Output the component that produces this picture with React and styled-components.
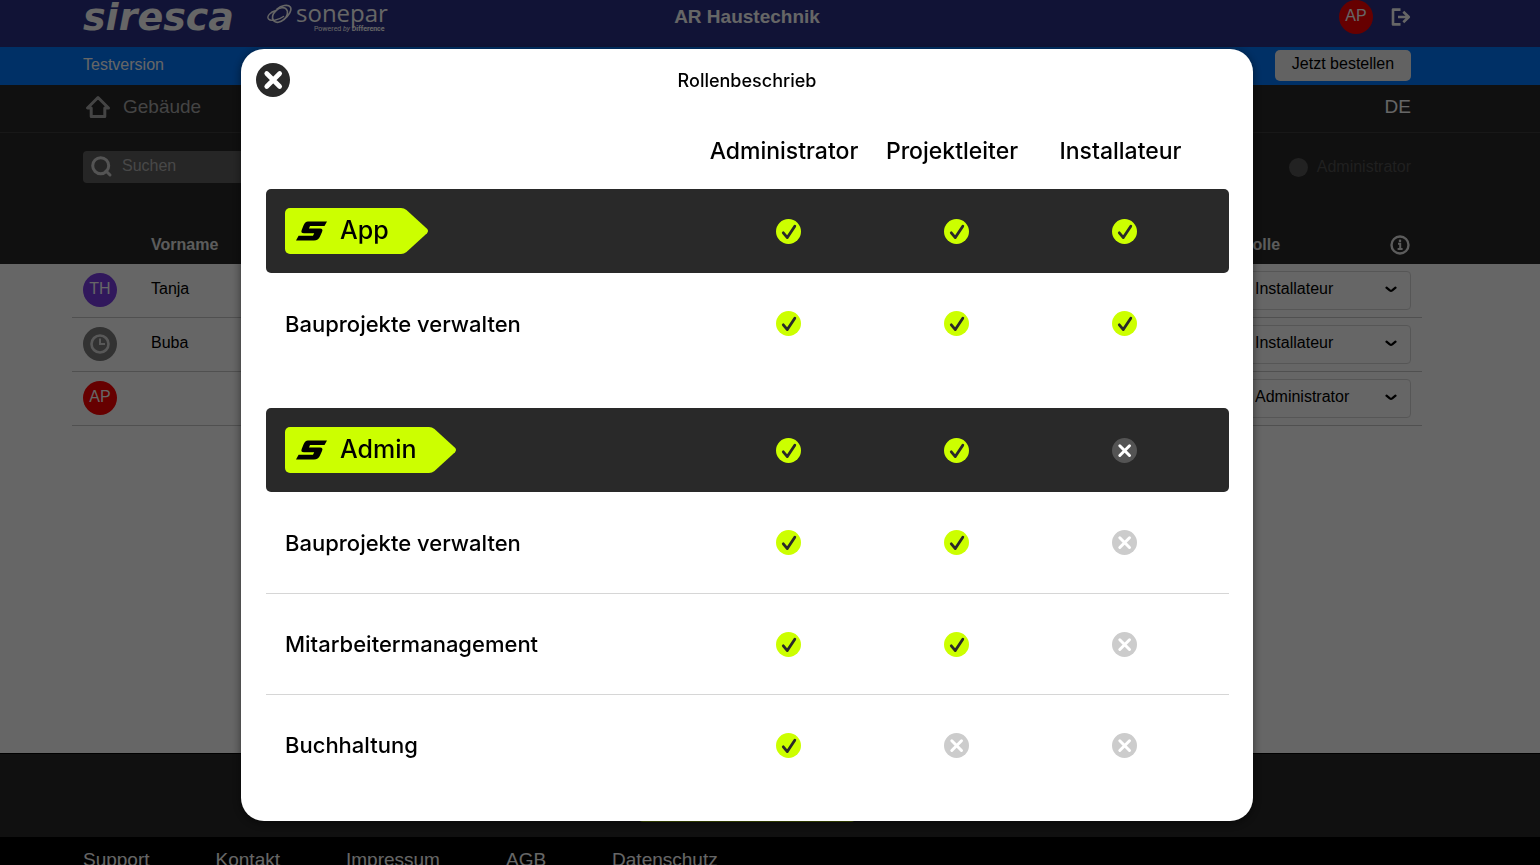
import React from "react";
import styled, { createGlobalStyle, css } from "styled-components";

const lime = "#ccff00";
const dark = "#292929";

const GlobalStyle = createGlobalStyle`
  *, *::before, *::after { box-sizing: border-box; }
  body {
    margin: 0;
    overflow: hidden;
    background: #000;
    font-family: "Liberation Sans", Arial, sans-serif;
    font-size: 16px;
    color: #000;
  }
  button, input, select { font: inherit; color: inherit; }
  a { color: inherit; text-decoration: none; }
  svg { display: block; flex-shrink: 0; }
`;

const Page = styled.div`
  display: flex;
  flex-direction: column;
  height: 100vh;
  overflow: hidden;
`;

const Band = styled.div`
  flex-shrink: 0;
  padding-right: 46px;
  background: ${(p) => p.$bg};
`;

const Inner = styled.div`
  max-width: 1328px;
  margin: 0 auto;
  display: flex;
  align-items: center;
  justify-content: space-between;
`;

const HeaderRow = styled(Inner)`
  display: grid;
  grid-template-columns: 1fr auto 1fr;
  height: 47px;
  padding-bottom: 15px;
  color: #fff;
`;

const Logos = styled.div`
  display: flex;
  align-items: center;
  gap: 26px;
`;

const Siresca = styled.span`
  width: 158px;
  font: italic bold 38px/32px "DejaVu Sans", sans-serif;
`;

const Sonepar = styled.div`
  display: flex;
  gap: 4px;
`;

const SoneparWords = styled.div`
  display: flex;
  flex-direction: column;
  font: 24px/24px "Open Sans", sans-serif;
`;

const Powered = styled.small`
  padding-left: 18px;
  font: 7px/8px Roboto, sans-serif;
`;

const Company = styled.strong`
  font-size: 19px;
`;

const Actions = styled.div`
  display: flex;
  align-items: center;
  justify-content: flex-end;
  gap: 18px;
`;

const IconButton = styled.button`
  display: flex;
  padding: 0;
  border: 0;
  background: none;
`;

const Avatar = styled.span`
  display: flex;
  align-items: center;
  justify-content: center;
  width: 34px;
  height: 34px;
  padding-bottom: ${(p) => (p.$icon ? 0 : 2)}px;
  border-radius: 50%;
  background: ${(p) => p.$color};
  color: #fff;
`;

const TrialRow = styled(Inner)`
  height: 38px;
  padding-bottom: 2px;
  color: #fff;
`;

const OrderButton = styled.button`
  width: 136px;
  height: 31px;
  padding: 0 0 3px;
  border: 0;
  border-radius: 5px;
  background: #f5f5f5;
  color: #000;
`;

const NavRow = styled(Inner)`
  height: 47px;
  padding-bottom: 4px;
  font-size: 19px;
  color: #fff;
`;

const NavLink = styled.a`
  display: flex;
  align-items: center;
  gap: 12px;
  color: #aaa;
`;

const Divider = styled.div`
  flex-shrink: 0;
  height: 1px;
  background: ${(p) => p.$color};
`;

const FilterRow = styled(Inner)`
  padding-top: 18px;
`;

const SearchLabel = styled.label`
  display: flex;
  align-items: center;
  gap: 9px;
  width: 320px;
  height: 32px;
  padding: 0 8px;
  border-radius: 4px;
  background: #606060;
  color: #d2d2d2;
`;

const SearchInput = styled.input`
  flex: 1;
  min-width: 0;
  padding: 0 0 2px;
  border: 0;
  background: none;
  &::placeholder { color: #b4b4b4; opacity: 1; }
`;

const RoleFilter = styled.label`
  display: flex;
  align-items: center;
  gap: 9px;
  color: #505050;
`;

const RoleRadio = styled.input`
  appearance: none;
  width: 19px;
  height: 19px;
  margin: 0;
  border-radius: 50%;
  background: #555;
`;

const HeadRow = styled(Inner)`
  height: 81px;
  padding-top: 43px;
  font-weight: bold;
  color: #e6e6e6;
`;

const HeadName = styled.span`
  padding-left: 68px;
`;

const RoleHead = styled.div`
  display: flex;
  align-items: center;
  justify-content: space-between;
  width: 170px;
`;

const People = styled.main`
  flex: 1;
  padding-right: 46px;
  background: #fff;
`;

const PeopleList = styled.div`
  max-width: 1350px;
  margin: 0 auto;
`;

const Person = styled.div`
  display: flex;
  align-items: center;
  height: 54px;
  padding: 0 11px 1px;
  border-bottom: 1px solid #c8c8c8;
`;

const PersonName = styled.span`
  flex: 1;
  padding: 0 0 2px 34px;
`;

const SelectBox = styled.div`
  display: grid;
  align-items: center;
  width: 170px;
  height: 39px;
  border: 1px solid #d8d8d8;
  border-radius: 4px;
  & > * { grid-area: 1 / 1; }
  & > svg { justify-self: end; margin-right: 13px; pointer-events: none; }
`;

const RoleSelect = styled.select`
  appearance: none;
  width: 100%;
  height: 100%;
  padding: 0 32px 4px 13px;
  border: 0;
  background: none;
`;

const InviteRow = styled(Inner)`
  height: 83px;
  padding-bottom: 1px;
  justify-content: center;
`;

const InviteButton = styled.button`
  width: 216px;
  height: 54px;
  border: 0;
  border-radius: 4px;
  background: #a3cc00;
`;

const FooterNav = styled(Inner)`
  justify-content: flex-start;
  align-items: flex-start;
  gap: 66px;
  height: 28px;
  padding-top: 12px;
  font-size: 19px;
  line-height: 22px;
  color: #fff;
`;

const Overlay = styled.div`
  position: fixed;
  inset: 0;
  display: flex;
  align-items: center;
  justify-content: center;
  padding: 5px 46px 0 0;
  background: rgba(0, 0, 0, 0.6);
`;

const Modal = styled.section`
  width: 1012px;
  max-width: 100%;
  padding: 14px 24px 26px 25px;
  border-radius: 23px;
  background: #fff;
  box-shadow: 0 2px 10px rgba(0, 0, 0, 0.5);
  font-family: Inter, sans-serif;
`;

const ModalHead = styled.header`
  display: grid;
  grid-template-columns: 34px 1fr 34px;
  align-items: center;
  height: 34px;
  margin: 0 -9px 0 -10px;
`;

const ModalTitle = styled.h2`
  margin: 0;
  font-size: 18px;
  font-weight: 500;
  text-align: center;
`;

const Matrix = styled.table`
  width: 100%;
  table-layout: fixed;
  border-collapse: separate;
  border-spacing: 0;
  font-size: 22px;
  font-weight: 500;
`;

const RoleTh = styled.th`
  width: ${(p) => (p.$last ? 189 : 168)}px;
  height: 92px;
  padding: 16px ${(p) => (p.$last ? 28 : 8)}px 0 0;
  font-size: 23px;
  font-weight: inherit;
  white-space: nowrap;
`;

const RowTh = styled.th`
  padding: 0 0 0 19px;
  font-weight: inherit;
  text-align: left;
`;

const Cell = styled.td`
  padding: 0;
  & > svg { margin: 0 auto; }
  &:last-child { padding-right: 20px; }
`;

const Row = styled.tr`
  ${(p) => p.$dark ? css`
    height: 84px;
    & > * { background: ${dark}; }
    & > :first-child { border-radius: 5px 0 0 5px; }
    & > :last-child { border-radius: 0 5px 5px 0; }
  ` : css`
    height: 101px;
  `}
  ${(p) => p.$line && css`
    & > * { border-top: 1px solid #d6d6d6; }
  `}
`;

const Spacer = styled.tr`
  height: 34px;
`;

const Tag = styled.span`
  display: inline-flex;
  vertical-align: middle;
  height: 46px;
`;

const TagBody = styled.span`
  display: flex;
  align-items: center;
  gap: 13px;
  padding: 0 11px;
  border-radius: 5px 0 0 5px;
  background: ${lime};
  font-size: 25px;
`;

const TagText = styled.span`
  padding-bottom: 2px;
`;

const Status = ({ ok, dim }) => (
  <svg width="25" height="25" viewBox="0 0 25 25" fill="none" strokeLinecap="round" strokeLinejoin="round" role="img" aria-label={ok ? "Ja" : "Nein"}>
    <circle cx="12.5" cy="12.5" r="12.5" fill={ok ? lime : dim ? "#545454" : "#cccccc"} />
    {ok
      ? <path d="M7.3 13.8L11.3 18.6L18.8 7.2" stroke={dark} strokeWidth="2.8" />
      : <path d="M7.8 7.8L17.5 17.5M17.5 7.8L7.8 17.5" stroke="#fff" strokeWidth="3" />}
  </svg>
);

const ProductTag = ({ children }) => (
  <Tag>
    <TagBody>
      <svg width="31" height="20" viewBox="0 0 31 20" fill="#000">
        <path d="M12 0.5H31L28.5 5H14L13 7.5H24Q27.5 7.5 26 11L24 15.5Q22.3 19.5 18 19.5H0L2.6 14.8H17L18.2 12.2H8Q4.3 12.2 5.8 8.7L7.6 4.3Q9 0.5 12 0.5Z" />
      </svg>
      <TagText>{children}</TagText>
    </TagBody>
    <svg width="28" height="46" viewBox="0 0 28 46" fill={lime}>
      <path d="M0 0H1Q4 0 6.5 2L27 20.8Q29 23 27 25.2L6.5 44Q4 46 1 46H0Z" />
    </svg>
  </Tag>
);

const Chevron = () => (
  <svg width="12" height="8" viewBox="0 0 12 8" fill="none" stroke="#000" strokeWidth="2.2" strokeLinecap="round" strokeLinejoin="round">
    <path d="M1.5 1.6L4.8 4.4Q6 5.2 7.2 4.4L10.5 1.6" />
  </svg>
);

const people = [
  { name: "Tanja", initials: "TH", color: "#7a3ce6", role: "Installateur" },
  { name: "Buba", color: "#7d7d7d", role: "Installateur" },
  { name: "", initials: "AP", color: "#ff0000", role: "Administrator" },
];

const roles = ["Administrator", "Projektleiter", "Installateur"];

const matrix = [
  { label: "App", tag: true, access: [true, true, true] },
  { label: "Bauprojekte verwalten", access: [true, true, true], gapAfter: true },
  { label: "Admin", tag: true, access: [true, true, false] },
  { label: "Bauprojekte verwalten", access: [true, true, false] },
  { label: "Mitarbeitermanagement", access: [true, true, false], line: true },
  { label: "Buchhaltung", access: [true, false, false], line: true },
];

export default function App() {
  return (
    <>
      <GlobalStyle />
      <Page>
        <Band as="header" $bg="#2b3187">
          <HeaderRow>
            <Logos>
              <Siresca>siresca</Siresca>
              <Sonepar>
                <svg width="25" height="26" viewBox="0 0 25 26" fill="none" stroke="#fff" strokeLinecap="round">
                  <ellipse cx="13" cy="14" rx="8.6" ry="6" transform="rotate(-42 13 14)" strokeWidth="1.7" />
                  <path d="M9 9.5C3 11 -0.5 15.5 1.5 18C3.500 20.5 11 19.5 16.500 15.500" strokeWidth="1.4" />
                  <path d="M10 8C14 4.500 21 3 23.300 6C25.300 9 22 14.500 17 18.500" strokeWidth="1.6" />
                </svg>
                <SoneparWords>
                  sonepar
                  <Powered>Powered <i>by</i> <b>Difference</b></Powered>
                </SoneparWords>
              </Sonepar>
            </Logos>
            <Company>AR Haustechnik</Company>
            <Actions>
              <Avatar $color="#ff0000">AP</Avatar>
              <IconButton aria-label="Abmelden">
                <svg width="20" height="18" viewBox="0 0 20 18" fill="none" stroke="#fff" strokeWidth="2.6" strokeLinejoin="round">
                  <path d="M9.500 1.6H2V16.400H9.500M7 9H17.500M12.300 3.800L17.800 9L12.300 14.200" />
                </svg>
              </IconButton>
            </Actions>
          </HeaderRow>
        </Band>

        <Band $bg="#0078ff">
          <TrialRow>
            <span>Testversion</span>
            <OrderButton>Jetzt bestellen</OrderButton>
          </TrialRow>
        </Band>

        <Band as="nav" $bg="#282828">
          <NavRow>
            <NavLink href="#gebaeude">
              <svg width="28" height="24" viewBox="0 0 28 24" fill="none" stroke="#aaa" strokeWidth="3" strokeLinejoin="round">
                <path d="M15 2.500L4.500 13H8.200V21.500H21.800V13H25.500Z" />
              </svg>
              Gebäude
            </NavLink>
            <a href="#de">DE</a>
          </NavRow>
        </Band>
        <Divider $color="#3c3c3c" />

        <Band $bg="#282828">
          <FilterRow>
            <SearchLabel>
              <svg width="22" height="22" viewBox="0 0 22 22" fill="none" stroke="#d2d2d2" strokeWidth="3" strokeLinecap="round">
                <circle cx="9.700" cy="9.700" r="8" />
                <path d="M15 15L19 19" />
              </svg>
              <SearchInput placeholder="Suchen" aria-label="Suchen" />
            </SearchLabel>
            <RoleFilter>
              <RoleRadio type="radio" name="rolle" />
              Administrator
            </RoleFilter>
          </FilterRow>
          <HeadRow>
            <HeadName>Vorname</HeadName>
            <RoleHead>
              <span>Rolle</span>
              <IconButton aria-label="Rollenbeschrieb">
                <svg width="22" height="20" viewBox="0 0 22 20" fill="none" stroke="#e6e6e6" strokeWidth="2.4">
                  <circle cx="11" cy="10" r="8.500" />
                  <path d="M9 8.700H11.200V14M8.600 14H13.600" strokeWidth="2" />
                  <circle cx="11" cy="5.900" r="0.600" strokeWidth="1.400" />
                </svg>
              </IconButton>
            </RoleHead>
          </HeadRow>
        </Band>

        <People>
          <PeopleList>
            {people.map((p, i) => (
              <Person key={i}>
                <Avatar $color={p.color} $icon={!p.initials}>
                  {p.initials || (
                    <svg width="20" height="20" viewBox="0 0 20 20" fill="none" stroke="#dcdcdc" strokeWidth="2.600">
                      <circle cx="10" cy="10" r="8.500" />
                      <path d="M10 4.500V10H15" strokeWidth="2" />
                    </svg>
                  )}
                </Avatar>
                <PersonName>{p.name}</PersonName>
                <SelectBox>
                  <RoleSelect aria-label={`Rolle ${p.name}`} defaultValue={p.role}>
                    {roles.map((r) => <option key={r}>{r}</option>)}
                  </RoleSelect>
                  <Chevron />
                </SelectBox>
              </Person>
            ))}
          </PeopleList>
        </People>

        <Divider $color="#000" />
        <Band $bg="#282828">
          <InviteRow>
            <InviteButton aria-label="Einladen" />
          </InviteRow>
        </Band>
        <Band as="footer" $bg="#000">
          <FooterNav>
            <a href="#support">Support</a>
            <a href="#kontakt">Kontakt</a>
            <a href="#impressum">Impressum</a>
            <a href="#agb">AGB</a>
            <a href="#datenschutz">Datenschutz</a>
          </FooterNav>
        </Band>
      </Page>

      <Overlay>
        <Modal role="dialog" aria-modal="true" aria-labelledby="modal-title">
          <ModalHead>
            <IconButton aria-label="Schliessen">
              <svg width="34" height="34" viewBox="0 0 34 34">
                <circle cx="17" cy="17" r="17" fill={dark} />
                <path d="M10.700 10.500L23.700 23.500M23.700 10.500L10.700 23.500" stroke="#fff" strokeWidth="4.600" strokeLinecap="round" />
              </svg>
            </IconButton>
            <ModalTitle id="modal-title">Rollenbeschrieb</ModalTitle>
          </ModalHead>
          <Matrix>
            <thead>
              <tr>
                <td />
                {roles.map((r, i) => <RoleTh key={r} scope="col" $last={i === 2}>{r}</RoleTh>)}
              </tr>
            </thead>
            <tbody>
              {matrix.map((m, i) => (
                <React.Fragment key={i}>
                  <Row $dark={m.tag} $line={m.line}>
                    <RowTh scope="row">{m.tag ? <ProductTag>{m.label}</ProductTag> : m.label}</RowTh>
                    {m.access.map((ok, j) => <Cell key={j}><Status ok={ok} dim={m.tag} /></Cell>)}
                  </Row>
                  {m.gapAfter && <Spacer aria-hidden="true" />}
                </React.Fragment>
              ))}
            </tbody>
          </Matrix>
        </Modal>
      </Overlay>
    </>
  );
}
